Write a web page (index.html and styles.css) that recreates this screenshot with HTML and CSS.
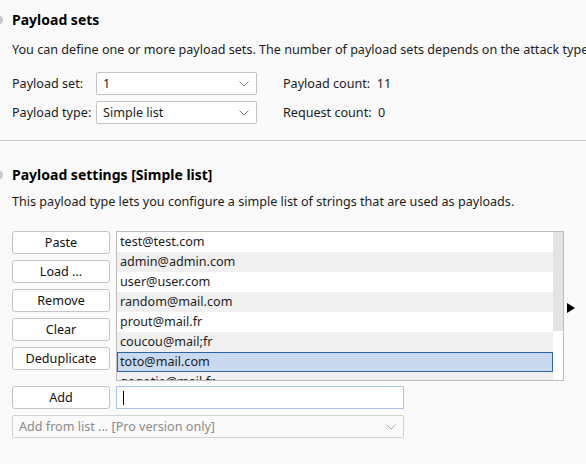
FILE: index.html
```html
<!DOCTYPE html>
<html>
<head>
<meta charset="utf-8">
<link rel="stylesheet" href="styles.css">
</head>
<body>
<section class="sets">
  <h2 class="title"><span class="dot"></span>Payload sets</h2>
  <p class="desc">You can define one or more payload sets. The number of payload sets depends on the attack type defined in the Positions tab.</p>
  <div class="grid">
    <span class="label">Payload set:</span>
    <div class="select"><span>1</span><svg class="chev" viewBox="0 0 10 6" width="10" height="6"><path d="M0.5 0.5 L5 5 L9.5 0.5" fill="none" stroke="#777" stroke-width="1"/></svg></div>
    <span class="info">Payload count:&nbsp; 11</span>
    <span class="label">Payload type:</span>
    <div class="select"><span>Simple list</span><svg class="chev" viewBox="0 0 10 6" width="10" height="6"><path d="M0.5 0.5 L5 5 L9.5 0.5" fill="none" stroke="#777" stroke-width="1"/></svg></div>
    <span class="info">Request count:&nbsp; 0</span>
  </div>
</section>
<hr class="sep">
<section class="settings">
  <h2 class="title"><span class="dot"></span>Payload settings [Simple list]</h2>
  <p class="desc">This payload type lets you configure a simple list of strings that are used as payloads.</p>
  <div class="editor">
    <div class="buttons">
      <button class="btn">Paste</button>
      <button class="btn">Load ...</button>
      <button class="btn">Remove</button>
      <button class="btn">Clear</button>
      <button class="btn">Deduplicate</button>
    </div>
    <div class="list">
      <ul class="items">
        <li>test@test.com</li>
        <li class="alt">admin@admin.com</li>
        <li>user@user.com</li>
        <li class="alt">random@mail.com</li>
        <li>prout@mail.fr</li>
        <li class="alt">coucou@mail;fr</li>
        <li class="sel">toto@mail.com</li>
        <li class="alt">gogotie@mail.fr</li>
      </ul>
      <div class="scroll"><div class="thumb"></div></div>
    </div>
    <div class="arrow-col"><svg class="arrow" viewBox="0 0 8 10" width="8" height="10"><path d="M0 0 L8 5 L0 10 Z" fill="#000"/></svg></div>
  </div>
  <div class="add-row">
    <button class="btn">Add</button>
    <div class="input"><span class="caret"></span></div>
  </div>
  <div class="select wide disabled"><span>Add from list ... [Pro version only]</span><svg class="chev" viewBox="0 0 10 6" width="10" height="6"><path d="M0.5 0.5 L5 5 L9.5 0.5" fill="none" stroke="#aaa" stroke-width="1"/></svg></div>
</section>
</body>
</html>
```
FILE: styles.css
```css
html, body {
  margin: 0;
  padding: 0;
}
body {
  background: #fafafa;
  font-family: "Noto Sans", "Open Sans", sans-serif;
  font-size: 12.6px;
  color: #1c1c1c;
  width: 586px;
  height: 464px;
  overflow: hidden;
}
.sets, .settings {
  padding-left: 12px;
  white-space: nowrap;
}
.sets {
  padding-top: 8px;
}
.title {
  margin: 0;
  font-size: 14px;
  font-weight: bold;
  line-height: 24px;
  color: #000;
  display: flex;
  align-items: center;
}
.dot {
  display: inline-block;
  width: 10px;
  height: 10px;
  border-radius: 50%;
  background: #c8c8c8;
  margin-left: -19px;
  margin-right: 9px;
}
.desc {
  margin: 8px 0 0;
  line-height: 20px;
}
.grid {
  margin-top: 12px;
  display: grid;
  grid-template-columns: 84px 161px auto;
  row-gap: 6px;
  align-items: center;
}
.label {
  line-height: 23px;
}
.info {
  padding-left: 26px;
}
.select {
  box-sizing: border-box;
  height: 23px;
  border: 1px solid #c4c4c4;
  border-radius: 2px;
  background: #fff;
  display: flex;
  align-items: center;
  justify-content: space-between;
  padding: 0 7px 0 6px;
}
.chev {
  display: block;
}
.sep {
  margin: 16px 0 0;
  border: 0;
  border-top: 1px solid #c8c8c8;
  height: 0;
}
.settings {
  padding-top: 22px;
}
.settings .desc {
  margin-top: 5px;
}
.editor {
  margin-top: 19px;
  display: flex;
  align-items: flex-start;
}
.buttons {
  display: flex;
  flex-direction: column;
  gap: 6px;
  width: 98px;
}
.btn {
  box-sizing: border-box;
  width: 98px;
  height: 23px;
  border: 1px solid #c4c4c4;
  border-radius: 3px;
  background: #fff;
  font-family: inherit;
  font-size: 12.6px;
  color: #111;
  padding: 0;
  line-height: 21px;
}
.list {
  box-sizing: border-box;
  margin-left: 6px;
  width: 448px;
  height: 150px;
  border: 1px solid #bdbdbd;
  background: #fff;
  display: flex;
  overflow: hidden;
}
.items {
  list-style: none;
  margin: 0;
  padding: 0;
  flex: 1;
}
.items li {
  box-sizing: border-box;
  height: 20px;
  line-height: 20px;
  padding-left: 3px;
  background: #fff;
}
.items li.alt {
  background: #f0f0f0;
}
.items li.sel {
  background: #c9daf0;
  border: 1px solid #2c64a0;
  line-height: 18px;
  padding-left: 2px;
}
.scroll {
  width: 10px;
  background: #fff;
}
.thumb {
  height: 99px;
  background: #e3e3e3;
}
.arrow-col {
  padding-top: 72px;
  padding-left: 3px;
}
.arrow {
  display: block;
}
.add-row {
  margin-top: 5px;
  display: flex;
  gap: 6px;
}
.input {
  box-sizing: border-box;
  width: 288px;
  height: 23px;
  border: 1px solid #a7c5ea;
  background: #fff;
  padding: 4px 6px;
}
.caret {
  display: block;
  width: 1px;
  height: 14px;
  background: #000;
}
.wide {
  margin-top: 6px;
  width: 392px;
}
.disabled {
  background: #fafafa;
  color: #8a8a8a;
  border-color: #d2d2d2;
}
```
